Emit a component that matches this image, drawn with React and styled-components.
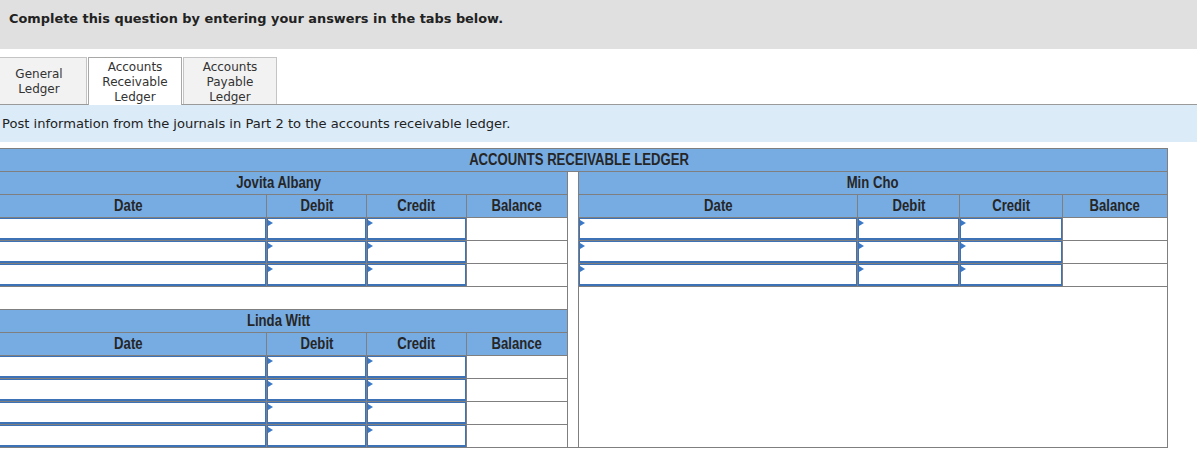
import React from "react";
import styled, { createGlobalStyle } from "styled-components";

const GlobalStyle = createGlobalStyle`
  html, body { margin: 0; padding: 0; background: #fff; }
  body {
    font-family: "DejaVu Sans", Verdana, sans-serif;
    color: #222;
    overflow: hidden;
  }
`;

const Page = styled.div`
  margin-left: -9px;
  width: 1206px;
`;

const TopBar = styled.div`
  height: 49px;
  box-sizing: border-box;
  background: #e0e0e0;
  padding: 11px 0 0 18px;
  font-weight: bold;
  font-size: 12.9px;
  line-height: 16px;
  color: #222;
`;

const TabBar = styled.div`
  display: flex;
  align-items: flex-end;
  gap: 1px;
  margin-top: 8px;
  height: 47px;
  border-bottom: 1px solid #9a9a9a;
`;

const Tab = styled.div`
  width: ${(p) => p.$w}px;
  height: ${(p) => (p.$active ? 48 : 47)}px;
  margin-bottom: ${(p) => (p.$active ? -1 : 0)}px;
  box-sizing: border-box;
  padding-top: 2px;
  border: 1px solid ${(p) => (p.$active ? "#a8a8a8" : "#c4c4c4")};
  border-bottom: none;
  background: ${(p) => (p.$active ? "#ffffff" : "#f2f2f2")};
  display: flex;
  align-items: center;
  justify-content: center;
  text-align: center;
  font-size: 12px;
  line-height: 15px;
  color: #333;
`;

const Instruction = styled.div`
  height: 37px;
  background: #dbebf8;
  display: flex;
  align-items: center;
  padding-left: 11px;
  font-size: 13.08px;
  color: #222;
`;

const grid = "#7f7f7f";
const headBlue = "#77ace3";

const Table = styled.div`
  margin-top: 6px;
  width: 1177px;
  border-top: 1px solid ${grid};
  font-family: "Liberation Sans", Arial, sans-serif;
  font-weight: bold;
  font-size: 16px;
  color: #262626;
`;

const Narrow = styled.span`
  display: inline-block;
  transform: scaleX(0.82);
  white-space: nowrap;
  line-height: 18px;
`;

const Title = styled.div`
  height: 23px;
  box-sizing: border-box;
  border-right: 1px solid ${grid};
  border-bottom: 1px solid ${grid};
  background: ${headBlue};
  display: flex;
  align-items: center;
  justify-content: center;
`;

const Body = styled.div`
  display: grid;
  grid-template-columns: 577px 11px 589px;
`;

const Column = styled.div`
  display: flex;
  flex-direction: column;
`;

const Ledger = styled.div`
  display: grid;
  grid-template-columns: ${(p) => p.$cols};
  grid-auto-rows: 23px;
`;

const Cell = styled.div`
  box-sizing: border-box;
  border-right: 1px solid ${grid};
  border-bottom: 1px solid ${grid};
  background: #fff;
`;

const HeadCell = styled(Cell)`
  background: ${headBlue};
  display: flex;
  align-items: center;
  justify-content: center;
  ${(p) => (p.$span ? "grid-column: 1 / -1;" : "")}
`;

const InputCell = styled(Cell)`
  display: flex;
`;

const InputBox = styled.div`
  flex: 1;
  position: relative;
  background: #fff;
  border: 1px solid #3d72b6;
  border-bottom-width: 2px;
  ${(p) =>
    p.$arrow
      ? `&::before {
    content: "";
    position: absolute;
    top: 1px;
    left: 0;
    width: 0;
    height: 0;
    border-top: 3px solid transparent;
    border-bottom: 3px solid transparent;
    border-left: 5px solid #3a78c8;
  }`
      : ""}
`;

const BlankRow = styled(Cell)`
  height: 23px;
`;

const Spacer = styled(Cell)`
  background: #fff;
`;

const Filler = styled(Cell)`
  flex: 1;
`;

function LedgerTable({ name, cols, rows, dateArrow }) {
  return (
    <Ledger $cols={cols}>
      <HeadCell $span>
        <Narrow>{name}</Narrow>
      </HeadCell>
      {["Date", "Debit", "Credit", "Balance"].map((h) => (
        <HeadCell key={h}>
          <Narrow>{h}</Narrow>
        </HeadCell>
      ))}
      {Array.from({ length: rows }).map((_, i) => (
        <React.Fragment key={i}>
          <InputCell>
            <InputBox $arrow={dateArrow} />
          </InputCell>
          <InputCell>
            <InputBox $arrow />
          </InputCell>
          <InputCell>
            <InputBox $arrow />
          </InputCell>
          <Cell />
        </React.Fragment>
      ))}
    </Ledger>
  );
}

const leftCols = "276px 100px 100px 101px";
const rightCols = "279px 102px 103px 105px";

export default function App() {
  return (
    <>
      <GlobalStyle />
      <Page>
        <TopBar>Complete this question by entering your answers in the tabs below.</TopBar>
        <TabBar>
          <Tab $w={96}>
            General
            <br />
            Ledger
          </Tab>
          <Tab $w={94} $active>
            Accounts
            <br />
            Receivable
            <br />
            Ledger
          </Tab>
          <Tab $w={94}>
            Accounts
            <br />
            Payable
            <br />
            Ledger
          </Tab>
        </TabBar>
        <Instruction>
          Post information from the journals in Part 2 to the accounts receivable ledger.
        </Instruction>
        <Table>
          <Title>
            <Narrow>ACCOUNTS RECEIVABLE LEDGER</Narrow>
          </Title>
          <Body>
            <Column>
              <LedgerTable name="Jovita Albany" cols={leftCols} rows={3} />
              <BlankRow />
              <LedgerTable name="Linda Witt" cols={leftCols} rows={4} />
            </Column>
            <Spacer />
            <Column>
              <LedgerTable name="Min Cho" cols={rightCols} rows={3} dateArrow />
              <Filler />
            </Column>
          </Body>
        </Table>
      </Page>
    </>
  );
}
